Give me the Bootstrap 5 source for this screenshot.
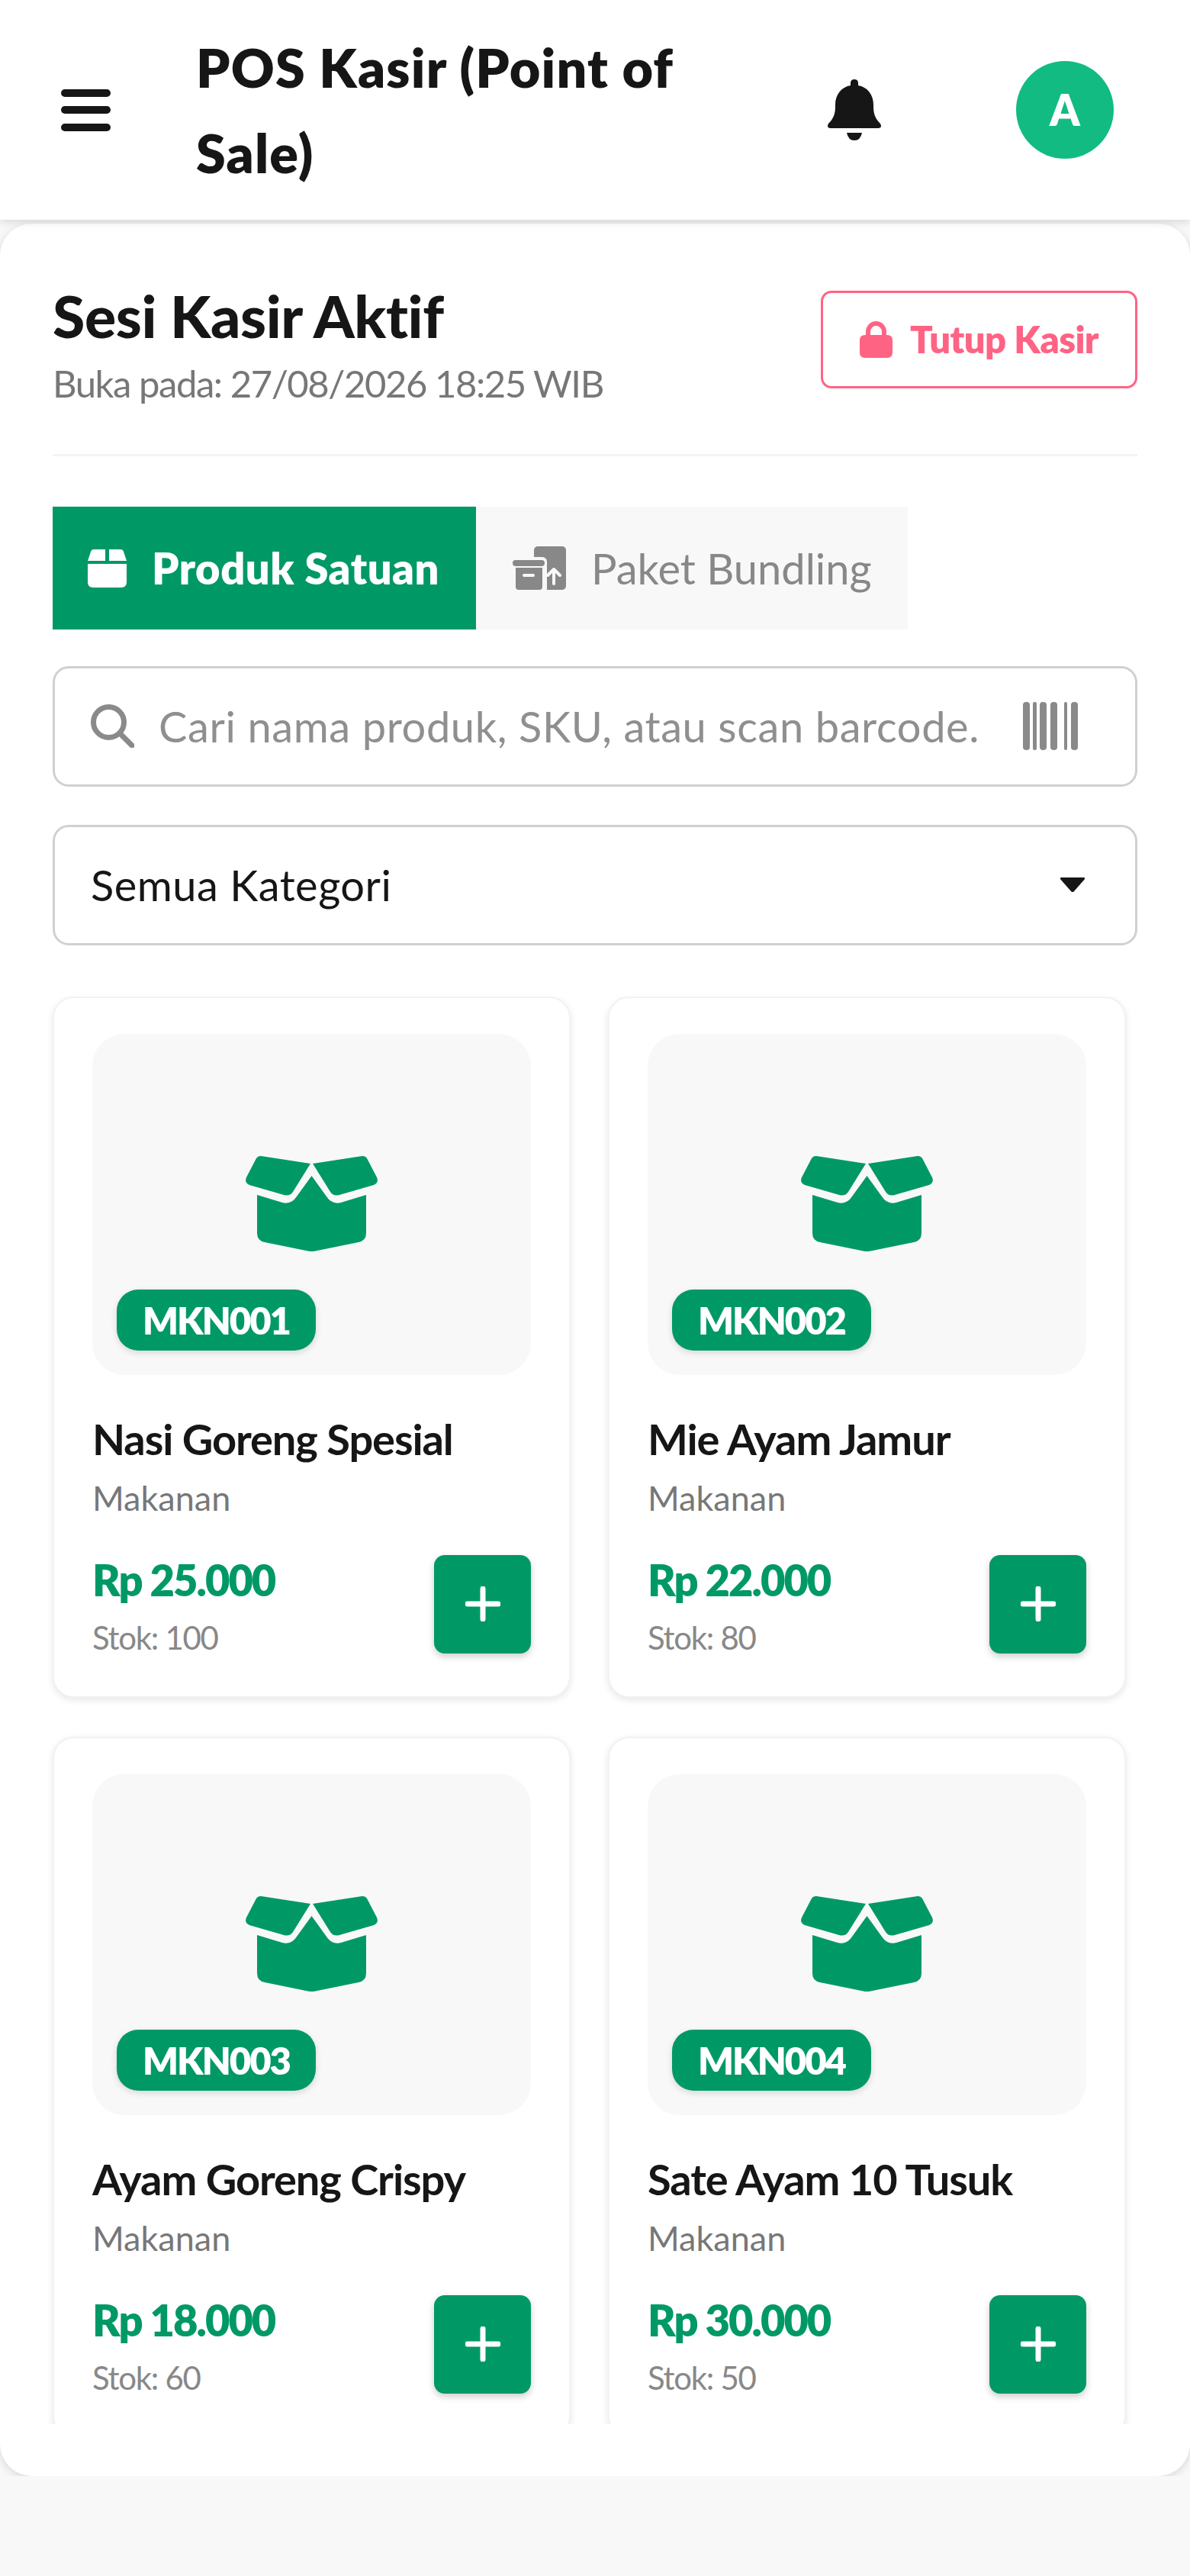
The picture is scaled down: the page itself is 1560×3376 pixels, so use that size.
<!DOCTYPE html>
<html lang="en">
<head>
    <meta charset="UTF-8">
    <meta name="viewport" content="width=device-width, initial-scale=1.0">
    <title>POS Kasir</title>
    <link href="https://cdn.jsdelivr.net/npm/bootstrap@5.3.0/dist/css/bootstrap.min.css" rel="stylesheet">
    <style>
        :root { --hijau: #009966; --teks: #161616; --abu: #777; }
        body { background: #f8f8f8; font-family: Lato, "Noto Sans", sans-serif; color: var(--teks); }
        .top-bar { height: 288px; background: #fff; box-shadow: 0 3px 10px #0002; padding: 0 80px; position: relative; z-index: 2; }
        .menu-ico { width: 65px; height: 55px; }
        .app-title { width: 720px; margin: 0 0 0 112px; font-size: 70px; line-height: 112px; font-weight: 800; letter-spacing: 1.2px; }
        .bell-ico { width: 70px; height: 80px; margin-right: 177px; }
        .avatar { width: 128px; height: 128px; margin-right: 20px; background: #12bb82; font-size: 56px; font-weight: 800; }
        .main-card { height: 2952px; margin-top: 5px; border: 0; border-radius: 42px; padding: 70px 69px 68px; box-shadow: 0 3px 12px #0002; }
        .sesi-head { padding-bottom: 54px; border-bottom: 3.5px solid #f3f3f3; }
        .sesi-title { font-size: 77px; line-height: 100px; font-weight: 900; margin: 0; letter-spacing: -.4px; }
        .sesi-sub { font-size: 49px; line-height: 78px; color: var(--abu); letter-spacing: -1.45px; }
        .btn-tutup { width: 415px; height: 128px; margin-top: 18px; gap: 23px; border: 3.5px solid #ff6384; border-radius: 14px; color: #ff6384; font-size: 49px; font-weight: 800; letter-spacing: -.6px; }
        .btn-tutup svg { width: 43px; height: 48px; }
        .tab-row { margin-top: 66px; }
        .tab-item { height: 161px; background: #f8f8f8; color: #888; font-size: 56px; }
        .tab-on { width: 555px; background: var(--hijau); color: #fff; font-weight: 800; letter-spacing: .5px; padding-left: 46px; gap: 32px; }
        .tab-off { width: 566px; padding-left: 48px; gap: 33px; }
        .search-box { height: 158px; margin-top: 48px; border: 3.5px solid #d0d0d0; border-radius: 21px; padding: 0 75px 0 47px; background: #fff; gap: 32px; }
        .search-box input { flex: 1; min-width: 0; border: 0; padding: 0; font-size: 56px; letter-spacing: .6px; background: none; box-shadow: none!important; }
        .search-box input::placeholder { color: #8f8f8f; }
        .barcode-ico { margin-left: 28px; }
        .pilih-kat { height: 159px; margin-top: 50px; border: 3.5px solid #d0d0d0; border-radius: 21px; padding: 0 47px; font-size: 56px; letter-spacing: .5px; color: var(--teks); background-size: 34px 20px; background-position: right 65px center; background-image: url("data:image/svg+xml,%3csvg xmlns='http://www.w3.org/2000/svg' viewBox='0 0 36 22'%3e%3cpath fill='%23161616' d='M2 0h32q3 0 1 3L20 20q-2 2-4 0L1 3Q-1 0 2 0z'/%3e%3c/svg%3e"); }
        .produk-scroll { height: 1874px; margin: 67px -6px 0; padding: 0 21px 0 6px; overflow: hidden; }
        .produk-grid { display: grid; grid-template-columns: 1fr 1fr; column-gap: 49px; row-gap: 51px; }
        .produk-card { height: 919px; border: 2px solid #f2f2f2; border-radius: 28px; padding: 47px 50px; box-shadow: 0 3px 10px #0000001a; }
        .produk-img { height: 448px; background: #f8f8f8; border-radius: 42px; position: relative; }
        .produk-img svg { width: 173px; height: 128px; margin-bottom: 6px; }
        .sku { position: absolute; left: 32px; bottom: 32px; height: 80px; padding: 0 34px; border-radius: 28px; background: var(--hijau); color: #fff; font-size: 49px; font-weight: 800; letter-spacing: -2px; box-shadow: 0 3px 8px #0002; }
        .produk-nama { margin-top: 45px; font-size: 56px; line-height: 78px; font-weight: 700; letter-spacing: -1.1px; }
        .produk-kat { font-size: 45px; line-height: 66px; margin-top: 5px; color: var(--abu); }
        .produk-foot { margin-top: 32px; height: 148px; }
        .harga-blok { padding-top: 8px; }
        .harga { font-size: 56px; line-height: 78px; font-weight: 800; letter-spacing: -2px; color: var(--hijau); }
        .stok { font-size: 42px; line-height: 68px; margin-top: 2px; letter-spacing: -1.3px; color: #888; }
        .btn-tambah { width: 127px; height: 129px; padding: 0; border: 0; border-radius: 14px; background: var(--hijau); box-shadow: 0 4px 10px #0003; }
        .btn-tambah svg { width: 46px; height: 46px; }
    </style>
</head>
<body>

<svg width="0" height="0" class="position-absolute">
    <symbol id="kotak-buka" viewBox="0 0 173 128">
        <path d="M20 3 85 13 62 50Q58 56 50 54L5 41Q-2 38 1 31L14 6Q16 3 20 3Z"/>
        <path d="M153 3 88 13 111 50Q115 56 123 54L168 41Q175 38 172 31L159 6Q157 3 153 3Z"/>
        <path d="M15 54 48 64Q60 67 67 56L86.500 29 106 56Q113 67 125 64L158 54V104Q158 114 148 116L89 128Q86.500 128.500 84 128L25 116Q15 114 15 104Z"/>
    </symbol>
    <symbol id="plus" viewBox="0 0 46 46">
        <path d="M23 3V43M3 23H43" stroke="#fff" stroke-width="7" stroke-linecap="round"/>
    </symbol>
</svg>

<!-- Header -->
<header class="top-bar d-flex align-items-center">
    <svg class="menu-ico flex-shrink-0" viewBox="0 0 65 55" fill="#161616">
        <rect width="65" height="10" rx="5"/><rect y="22" width="65" height="10" rx="5"/><rect y="45" width="65" height="10" rx="5"/>
    </svg>
    <h1 class="app-title">POS Kasir (Point of Sale)</h1>
    <svg class="bell-ico ms-auto" viewBox="0 0 70 80" fill="#161616">
        <path d="M35 0q5 0 5 5v3C52 10 60 20 60 33v3C60 46 63 52 69 58Q72 64 66 64H4Q-2 64 1 58C7 52 10 46 10 36V33C10 20 18 10 30 8V5q0-5 5-5z"/>
        <path d="M25 70h20q-2 10-10 10t-10-10z"/>
    </svg>
    <div class="avatar rounded-circle text-white d-flex align-items-center justify-content-center">A</div>
</header>

<!-- Sesi kasir -->
<main class="main-card card">
    <div class="sesi-head d-flex justify-content-between align-items-start">
        <div>
            <h2 class="sesi-title">Sesi Kasir Aktif</h2>
            <div class="sesi-sub">Buka pada: 27/08/2026 18:25 WIB</div>
        </div>
        <button class="btn-tutup btn d-flex align-items-center justify-content-center">
            <svg viewBox="0 0 43 48" fill="#ff6384"><path d="M8 18v-4a13.500 14 0 0 1 27 0v4h-6v-4a7.500 8 0 0 0-15 0v4zM7 18h29q7 0 7 7v16q0 7-7 7H7q-7 0-7-7V25q0-7 7-7z"/></svg>
            Tutup Kasir
        </button>
    </div>

    <div class="tab-row d-flex">
        <div class="tab-item tab-on d-flex align-items-center">
            <svg width="52" height="50" viewBox="0 0 52 50" fill="#fff"><path d="M8 0h15v15H0L4 3q1-3 4-3zM28 0h15q3 0 4 3l4 12H28zM0 19h51v24q0 7-7 7H7q-7 0-7-7z"/></svg>
            Produk Satuan
        </div>
        <div class="tab-item tab-off d-flex align-items-center">
            <svg width="70" height="57" viewBox="0 0 70 57" fill="#888">
                <rect x="28" width="42" height="57" rx="5"/>
                <rect x="-4" y="14" width="49" height="48" rx="6" fill="#f8f8f8"/>
                <rect y="18" width="42" height="8" rx="4"/>
                <path d="M4 28h35v25q0 4-4 4H8q-4 0-4-4z"/>
                <path d="M15 38h12" stroke="#f8f8f8" stroke-width="4" stroke-linecap="round"/>
                <path d="M54 49V30M46 38l8-8 8 8" fill="none" stroke="#f8f8f8" stroke-width="4" stroke-linecap="round" stroke-linejoin="round"/>
            </svg>
            Paket Bundling
        </div>
    </div>

    <div class="search-box d-flex align-items-center">
        <svg class="flex-shrink-0" width="57" height="57" viewBox="0 0 57 57" fill="none" stroke="#8a8a8a" stroke-width="7" stroke-linecap="round"><circle cx="23.500" cy="23.500" r="20"/><path d="M38 38l16 16"/></svg>
        <input class="form-control" type="text" placeholder="Cari nama produk, SKU, atau scan barcode...">
        <svg class="barcode-ico flex-shrink-0" width="72" height="63" viewBox="0 0 72 63" fill="#8a8a8a">
            <rect width="9" height="63" rx="4"/><rect x="13" width="5" height="63" rx="2"/><rect x="22" width="9" height="63" rx="4"/><rect x="36" width="9" height="63" rx="4"/><rect x="54" width="4" height="63" rx="2"/><rect x="63" width="9" height="63" rx="4"/>
        </svg>
    </div>

    <select class="pilih-kat form-select">
        <option>Semua Kategori</option>
    </select>

    <!-- Grid produk -->
    <div class="produk-scroll">
        <div class="produk-grid">
            <div class="produk-card card">
                <div class="produk-img d-flex align-items-center justify-content-center">
                    <svg fill="#009966"><use href="#kotak-buka"/></svg>
                    <span class="sku d-flex align-items-center">MKN001</span>
                </div>
                <div class="produk-nama">Nasi Goreng Spesial</div>
                <div class="produk-kat">Makanan</div>
                <div class="produk-foot d-flex justify-content-between align-items-center">
                    <div class="harga-blok"><div class="harga">Rp 25.000</div><div class="stok">Stok: 100</div></div>
                    <button class="btn-tambah btn d-flex align-items-center justify-content-center"><svg><use href="#plus"/></svg></button>
                </div>
            </div>
            <div class="produk-card card">
                <div class="produk-img d-flex align-items-center justify-content-center">
                    <svg fill="#009966"><use href="#kotak-buka"/></svg>
                    <span class="sku d-flex align-items-center">MKN002</span>
                </div>
                <div class="produk-nama">Mie Ayam Jamur</div>
                <div class="produk-kat">Makanan</div>
                <div class="produk-foot d-flex justify-content-between align-items-center">
                    <div class="harga-blok"><div class="harga">Rp 22.000</div><div class="stok">Stok: 80</div></div>
                    <button class="btn-tambah btn d-flex align-items-center justify-content-center"><svg><use href="#plus"/></svg></button>
                </div>
            </div>
            <div class="produk-card card">
                <div class="produk-img d-flex align-items-center justify-content-center">
                    <svg fill="#009966"><use href="#kotak-buka"/></svg>
                    <span class="sku d-flex align-items-center">MKN003</span>
                </div>
                <div class="produk-nama">Ayam Goreng Crispy</div>
                <div class="produk-kat">Makanan</div>
                <div class="produk-foot d-flex justify-content-between align-items-center">
                    <div class="harga-blok"><div class="harga">Rp 18.000</div><div class="stok">Stok: 60</div></div>
                    <button class="btn-tambah btn d-flex align-items-center justify-content-center"><svg><use href="#plus"/></svg></button>
                </div>
            </div>
            <div class="produk-card card">
                <div class="produk-img d-flex align-items-center justify-content-center">
                    <svg fill="#009966"><use href="#kotak-buka"/></svg>
                    <span class="sku d-flex align-items-center">MKN004</span>
                </div>
                <div class="produk-nama">Sate Ayam 10 Tusuk</div>
                <div class="produk-kat">Makanan</div>
                <div class="produk-foot d-flex justify-content-between align-items-center">
                    <div class="harga-blok"><div class="harga">Rp 30.000</div><div class="stok">Stok: 50</div></div>
                    <button class="btn-tambah btn d-flex align-items-center justify-content-center"><svg><use href="#plus"/></svg></button>
                </div>
            </div>
        </div>
    </div>
</main>

<script src="https://cdn.jsdelivr.net/npm/bootstrap@5.3.0/dist/js/bootstrap.bundle.min.js"></script>
</body>
</html>
